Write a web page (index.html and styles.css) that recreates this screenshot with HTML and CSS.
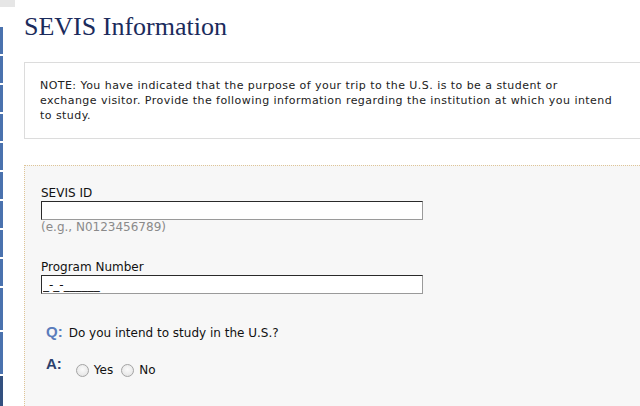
FILE: index.html
```html
<!DOCTYPE html>
<html lang="en">
<head>
<meta charset="utf-8">
<title>SEVIS Information</title>
<link rel="stylesheet" href="styles.css">
</head>
<body>
<div class="page">
  <nav class="sidenav">
    <div class="corner"></div>
    <div class="tab"></div>
    <div class="tab"></div>
    <div class="tab"></div>
    <div class="tab"></div>
    <div class="tab"></div>
    <div class="tab"></div>
    <div class="tab"></div>
    <div class="tab"></div>
    <div class="tab"></div>
    <div class="tab tall"></div>
    <div class="tab tall"></div>
    <div class="tab active"></div>
  </nav>
  <main class="main">
    <h1 class="title">SEVIS Information</h1>
    <div class="note">NOTE: You have indicated that the purpose of your trip to the U.S. is to be a student or<br>exchange visitor. Provide the following information regarding the institution at which you intend to study.</div>
    <section class="panel">
      <div class="field">
        <label class="label" for="sevis">SEVIS ID</label>
        <input class="text-input" id="sevis" type="text">
        <div class="hint">(e.g., N0123456789)</div>
      </div>
      <div class="field field-program">
        <label class="label" for="program">Program Number</label>
        <input class="text-input" id="program" type="text" value="_-_-______">
      </div>
      <div class="qa q-row">
        <span class="qa-mark q-mark">Q:</span>
        <span class="question">Do you intend to study in the U.S.?</span>
      </div>
      <div class="qa a-row">
        <span class="qa-mark a-mark">A:</span>
        <div class="options">
          <input class="radio" type="radio" name="study" id="yes"><label class="opt-label" for="yes">Yes</label>
          <input class="radio" type="radio" name="study" id="no"><label class="opt-label" for="no">No</label>
        </div>
      </div>
    </section>
  </main>
</div>
</body>
</html>
```

FILE: styles.css
```css
html, body {
  margin: 0;
  padding: 0;
  background: #fff;
  overflow: hidden;
}

body {
  font-family: "DejaVu Sans", Verdana, sans-serif;
  color: #1a1a1a;
  height: 406px;
}

.page {
  display: flex;
  align-items: flex-start;
}

.sidenav {
  width: 3px;
  flex: none;
  display: flex;
  flex-direction: column;
}

.corner {
  width: 15px;
  height: 7px;
  background: #e6e6e6;
  margin-bottom: 20px;
}

.tab {
  height: 27px;
  margin-bottom: 2px;
  background: #4a72ae;
}

.tab.tall {
  height: 42px;
}

.tab.active {
  height: 30px;
  margin-bottom: 0;
  background: #33507f;
}

.main {
  margin-left: 21px;
  width: 660px;
  flex: none;
}

.title {
  margin: 12px 0 0 0;
  font-family: "Liberation Serif", "Times New Roman", serif;
  font-weight: normal;
  font-size: 26px;
  line-height: 30px;
  color: #1b2b5c;
}

.note {
  margin-top: 20px;
  border: 1px solid #dcdcdc;
  padding: 15px 65px 15px 15px;
  font-size: 11px;
  line-height: 15px;
  letter-spacing: 0.45px;
  color: #222;
}

.panel {
  margin-top: 26px;
  border-top: 1px dotted #dfc597;
  border-left: 1px dotted #dfc597;
  background: #f7f7f7;
  padding: 20px 0 30px 16px;
  font-size: 12px;
  line-height: 15px;
}

.field {
  display: flex;
  flex-direction: column;
  align-items: flex-start;
}

.field-program {
  margin-top: 25px;
}

.label {
  color: #111;
}

.text-input {
  box-sizing: border-box;
  width: 382px;
  height: 19px;
  margin: 0;
  padding: 0 1px;
  border: 1px solid;
  border-color: #2a2a2a #9a9a9a #9a9a9a #2a2a2a;
  background: #fff;
  font-family: "DejaVu Sans", Verdana, sans-serif;
  font-size: 12px;
  color: #111;
}

.hint {
  color: #8a8a8a;
}

.qa {
  display: flex;
  margin-left: 5px;
}

.q-row {
  margin-top: 29px;
  align-items: baseline;
  gap: 6px;
}

.a-row {
  margin-top: 14px;
  align-items: flex-start;
  gap: 14px;
}

.qa-mark {
  font-family: "Liberation Sans", Arial, sans-serif;
  font-weight: bold;
  font-size: 15px;
  line-height: 18px;
}

.q-mark {
  color: #5a7cbc;
}

.a-mark {
  color: #2c416d;
}

.question {
  color: #111;
}

.options {
  display: flex;
  align-items: center;
  margin-top: 8px;
}

.radio {
  appearance: none;
  -webkit-appearance: none;
  box-sizing: border-box;
  width: 13px;
  height: 13px;
  margin: 0;
  border: 1px solid #a4a4a4;
  border-radius: 50%;
  background: radial-gradient(circle at 50% 40%, #fbfbfb 0%, #e8e8e8 70%, #dadada 100%);
}

.opt-label {
  margin-left: 5px;
  margin-right: 8px;
  color: #111;
}
```
